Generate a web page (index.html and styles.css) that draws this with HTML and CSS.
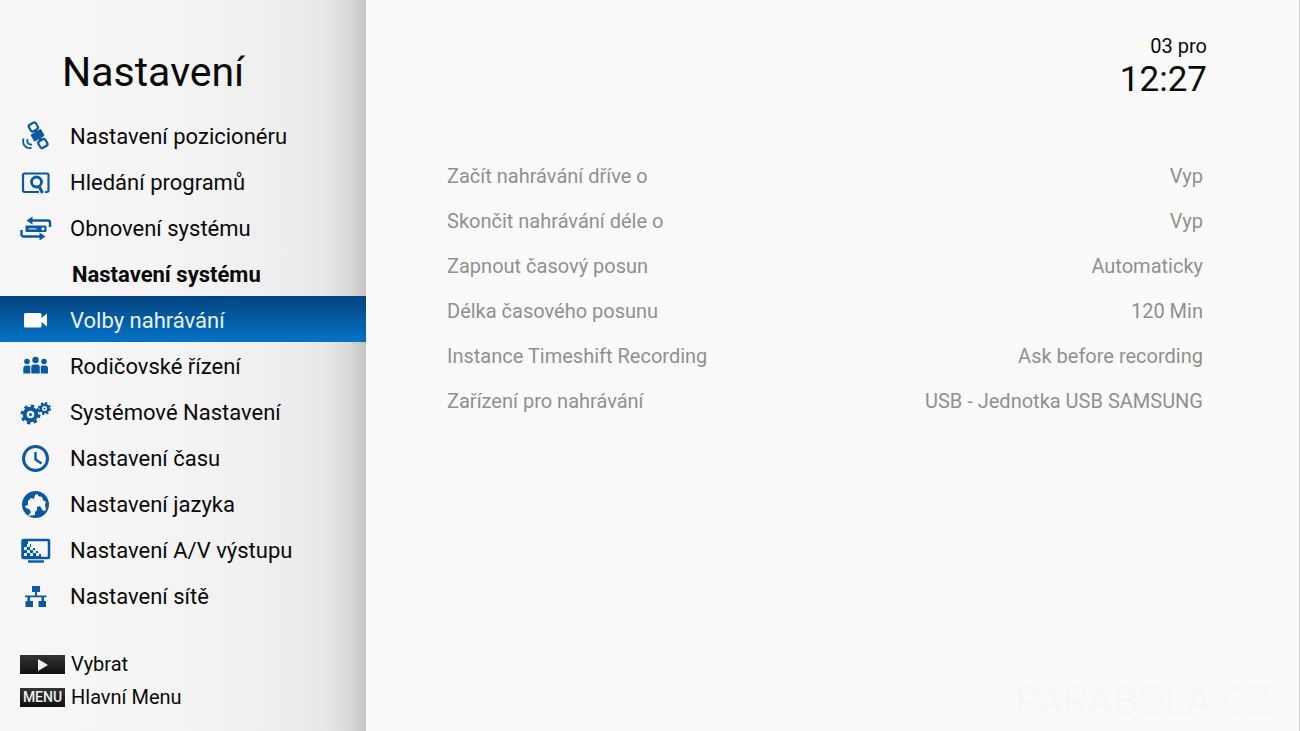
FILE: index.html
```html
<!DOCTYPE html>
<html lang="cs">
<head>
    <meta charset="UTF-8">
    <meta name="viewport" content="width=device-width, initial-scale=1.0">
    <title>Nastavení</title>
    <link rel="stylesheet" href="styles.css">
</head>
<body>
    <div class="screen">
        <aside class="sidebar">
            <h1>Nastavení</h1>
            <nav class="menu">
                <a class="menu-item" href="#positioner">
                    <svg class="icon" viewBox="0 0 32 32">
                        <g transform="rotate(-30 18 14)">
                            <rect x="14" y="1" width="8" height="7.500" rx="2" fill="none" stroke="currentColor" stroke-width="2.200"/>
                            <rect x="14" y="20" width="8" height="7.500" rx="2" fill="none" stroke="currentColor" stroke-width="2.200"/>
                            <path d="M16.500 8h3v12h-3z" fill="currentColor"/>
                            <rect x="11.500" y="10" width="12" height="8" rx="1" fill="currentColor"/>
                        </g>
                        <path d="M7.500 18c-1 3.500 1 6 4.500 5.500M3.500 17.500c-1.500 6 2 10.500 8 9.500" fill="none" stroke="currentColor" stroke-width="1.800"/>
                    </svg>
                    <span>Nastavení pozicionéru</span>
                </a>
                <a class="menu-item" href="#search">
                    <svg class="icon" viewBox="0 0 32 32" fill="none" stroke="currentColor" stroke-width="2.200">
                        <path d="M19 25H4.500A1.500 1.500 0 0 1 3 23.500V8a1.500 1.500 0 0 1 1.500-1.500h22.500A1.500 1.500 0 0 1 28.500 8v15.500A1.500 1.500 0 0 1 27 25h-2"/>
                        <circle cx="16.500" cy="15" r="5" stroke-width="2.800"/>
                        <path d="M19 19l3.500 7" stroke-width="3"/>
                    </svg>
                    <span>Hledání programů</span>
                </a>
                <a class="menu-item" href="#restore">
                    <svg class="icon" viewBox="0 0 32 32" fill="none" stroke="currentColor" stroke-width="2.400">
                        <path d="M9 7.500h19a2 2 0 0 1 2 2V14M23 23.500H3.500a2 2 0 0 1-2-2V17"/>
                        <path d="M6.500 7.500l6-4v8zM25.500 23.500l-6-4v8z" fill="currentColor" stroke="none"/>
                        <rect x="5.500" y="12.500" width="21" height="6.500" rx="1" fill="currentColor" stroke="none"/>
                        <path d="M8.500 15.800h8" stroke="#b9d0e5" stroke-width="1.300"/>
                        <circle cx="23" cy="15.800" r="1.600" fill="#f5f5f5" stroke="none"/>
                    </svg>
                    <span>Obnovení systému</span>
                </a>
                <h2>Nastavení systému</h2>
                <a class="menu-item active" href="#recording" aria-current="page">
                    <svg class="icon" viewBox="0 0 32 32" fill="currentColor">
                        <path d="M5.500 8H20a1.500 1.500 0 0 1 1.500 1.500v3.500l5.500-4.500v13L21.500 17v4a1.500 1.500 0 0 1-1.500 1.500H5.500A1.500 1.500 0 0 1 4 21V9.500A1.500 1.500 0 0 1 5.500 8z"/>
                    </svg>
                    <span>Volby nahrávání</span>
                </a>
                <a class="menu-item" href="#parental">
                    <svg class="icon" viewBox="0 0 32 32" fill="currentColor">
                        <circle cx="7" cy="10.500" r="2.800"/>
                        <circle cx="15.500" cy="9" r="3.200"/>
                        <circle cx="24" cy="10.500" r="2.800"/>
                        <path d="M3.300 22.500V17.500a3 3 0 0 1 3-3h3l1 1v7zM11.300 22.500V16a2.500 2.500 0 0 1 2.500-2.500h3.500a2.500 2.500 0 0 1 2.500 2.500v6.500zM20.800 22.500V15.500l1-1H25a3 3 0 0 1 3 3v5z"/>
                    </svg>
                    <span>Rodičovské řízení</span>
                </a>
                <a class="menu-item" href="#system">
                    <svg class="icon" viewBox="0 0 32 32" fill="none" stroke="currentColor">
                        <circle cx="10.500" cy="17.500" r="5.800" stroke-width="4"/>
                        <circle cx="10.500" cy="17.500" r="8.500" stroke-width="3" stroke-dasharray="3.340 3.340"/>
                        <circle cx="10.500" cy="17.500" r="1.500" fill="currentColor" stroke="none"/>
                        <circle cx="24.500" cy="11.500" r="3.800" stroke-width="2.600"/>
                        <circle cx="24.500" cy="11.500" r="5.500" stroke-width="2" stroke-dasharray="2.160 2.160"/>
                        <circle cx="24.500" cy="11.500" r="1" fill="currentColor" stroke="none"/>
                    </svg>
                    <span>Systémové Nastavení</span>
                </a>
                <a class="menu-item" href="#time">
                    <svg class="icon" viewBox="0 0 32 32" fill="none" stroke="currentColor" stroke-width="3">
                        <circle cx="15.500" cy="15.500" r="12"/>
                        <path d="M15.500 9v7.500l6 4" stroke-width="2.400"/>
                    </svg>
                    <span>Nastavení času</span>
                </a>
                <a class="menu-item" href="#language">
                    <svg class="icon" viewBox="0 0 32 32">
                        <circle cx="15.500" cy="15.500" r="13.500" fill="currentColor"/>
                        <path d="M5 17l3-1v-4l3-3 3 1 1-4 3-1v2l4 1 1 3 3 2-1 3 1 5-3 1-3-5-3 1v3l-2 2v3l-7 1 3-4-2-3-3-1z" fill="#f7f7f7"/>
                    </svg>
                    <span>Nastavení jazyka</span>
                </a>
                <a class="menu-item" href="#av-output">
                    <svg class="icon" viewBox="0 0 32 32">
                        <rect x="2.500" y="5" width="26.500" height="18" rx="1" fill="none" stroke="currentColor" stroke-width="2.500"/>
                        <path d="M3 6h5v3h3v4h4v3h3v3h3v4H3z" fill="currentColor"/>
                        <path d="M7 9h3v3H7zM4 12h3v3H4zM10 12h3v3h-3zM7 15h3v3H7zM13 15h3v3h-3zM4 18h3v3H4zM10 18h3v3h-3zM16 18h3v3h-3z" fill="#e4ecf4"/>
                        <path d="M8 26.500h16" stroke="currentColor" stroke-width="2.400"/>
                    </svg>
                    <span>Nastavení A/V výstupu</span>
                </a>
                <a class="menu-item" href="#network">
                    <svg class="icon" viewBox="0 0 32 32" fill="currentColor">
                        <path d="M12 5h8v6h-3v3.500h9.500v1.800h-2.500V20h2v6h-7.500v-6h3v-3.700h-11.500V20h3v6H5.500v-6h2v-3.700H5v-1.800h10V11h-3z"/>
                    </svg>
                    <span>Nastavení sítě</span>
                </a>
            </nav>
            <div class="hints">
                <div class="hint">
                    <kbd><svg class="play" viewBox="0 0 10 12"><path d="M0 0l10 6-10 6z" fill="currentColor"/></svg></kbd>
                    <span>Vybrat</span>
                </div>
                <div class="hint">
                    <kbd>MENU</kbd>
                    <span>Hlavní Menu</span>
                </div>
            </div>
        </aside>

        <main class="content">
            <header class="clock">
                <div class="date">03 pro</div>
                <time class="time">12:27</time>
            </header>
            <dl class="options">
                <div class="option">
                    <dt>Začít nahrávání dříve o</dt>
                    <dd>Vyp</dd>
                </div>
                <div class="option">
                    <dt>Skončit nahrávání déle o</dt>
                    <dd>Vyp</dd>
                </div>
                <div class="option">
                    <dt>Zapnout časový posun</dt>
                    <dd>Automaticky</dd>
                </div>
                <div class="option">
                    <dt>Délka časového posunu</dt>
                    <dd>120 Min</dd>
                </div>
                <div class="option">
                    <dt>Instance Timeshift Recording</dt>
                    <dd>Ask before recording</dd>
                </div>
                <div class="option">
                    <dt>Zařízení pro nahrávání</dt>
                    <dd>USB - Jednotka USB SAMSUNG</dd>
                </div>
            </dl>
            <div class="watermark">PARABOLA.CZ</div>
        </main>
    </div>
</body>
</html>
```

FILE: styles.css
```css
:root {
    --bg-color: #fafafa;
    --text-color: #0a0a0a;
    --text-muted: #909090;
    --accent-color: #0b59a4;
}

* {
    margin: 0;
    padding: 0;
    box-sizing: border-box;
}

body {
    font-family: Roboto, "Liberation Sans", sans-serif;
    background-color: var(--bg-color);
    color: var(--text-color);
}

.screen {
    display: flex;
    min-height: 100vh;
}

/* Sidebar */
.sidebar {
    flex: 0 0 366px;
    display: flex;
    flex-direction: column;
    padding: 44px 0 17px;
    background: linear-gradient(to right, #f7f7f7 0%, #f5f5f5 40%, #efefef 75%, #e8e8e8 89%, #dadada 95%, #c4c4c4 100%);
}

.sidebar h1 {
    padding-left: 62px;
    margin-bottom: 12px;
    font-size: 41px;
    line-height: 56px;
    font-weight: 400;
}

.menu {
    display: flex;
    flex-direction: column;
}

.menu-item,
.menu h2 {
    display: flex;
    align-items: center;
    height: 46px;
    padding-top: 3px;
    font-size: 22px;
    line-height: 28px;
}

.menu h2 {
    padding-left: 72px;
    font-weight: 700;
}

.menu-item {
    gap: 18px;
    padding-left: 20px;
    color: inherit;
    text-decoration: none;
}

.menu-item.active {
    background: linear-gradient(to bottom, #04437d, #0573c8);
    color: #e8f3fc;
}

.icon {
    flex: none;
    width: 32px;
    height: 32px;
    color: var(--accent-color);
}

.active .icon {
    color: #ffffff;
}

.hints {
    margin-top: auto;
}

.hint {
    display: flex;
    align-items: center;
    gap: 6px;
    padding-left: 20px;
    font-size: 20px;
    line-height: 33px;
}

kbd {
    display: flex;
    align-items: center;
    justify-content: center;
    width: 45px;
    height: 19px;
    background: linear-gradient(to bottom, #333333, #111111);
    color: #f0f0f0;
    font-family: inherit;
    font-size: 14px;
    font-weight: 500;
    line-height: 19px;
}

.play {
    width: 10px;
    height: 12px;
}

/* Content */
.content {
    flex: 1;
    display: flex;
    flex-direction: column;
    padding: 34px 92px 3px 81px;
    border-right: 1px solid #cccccc;
}

.clock {
    text-align: right;
}

.date {
    font-size: 20px;
    line-height: 24px;
}

.time {
    display: block;
    font-size: 35px;
    line-height: 44px;
}

.options {
    margin-top: 52px;
    padding-right: 4px;
    color: var(--text-muted);
}

.option {
    display: flex;
    justify-content: space-between;
    font-size: 20px;
    line-height: 45px;
}

.watermark {
    align-self: flex-end;
    margin-top: auto;
    margin-right: -64px;
    font-size: 40px;
    line-height: 52px;
    font-weight: 300;
    color: var(--bg-color);
    -webkit-text-stroke: 1px #f6f6f6;
}
```
